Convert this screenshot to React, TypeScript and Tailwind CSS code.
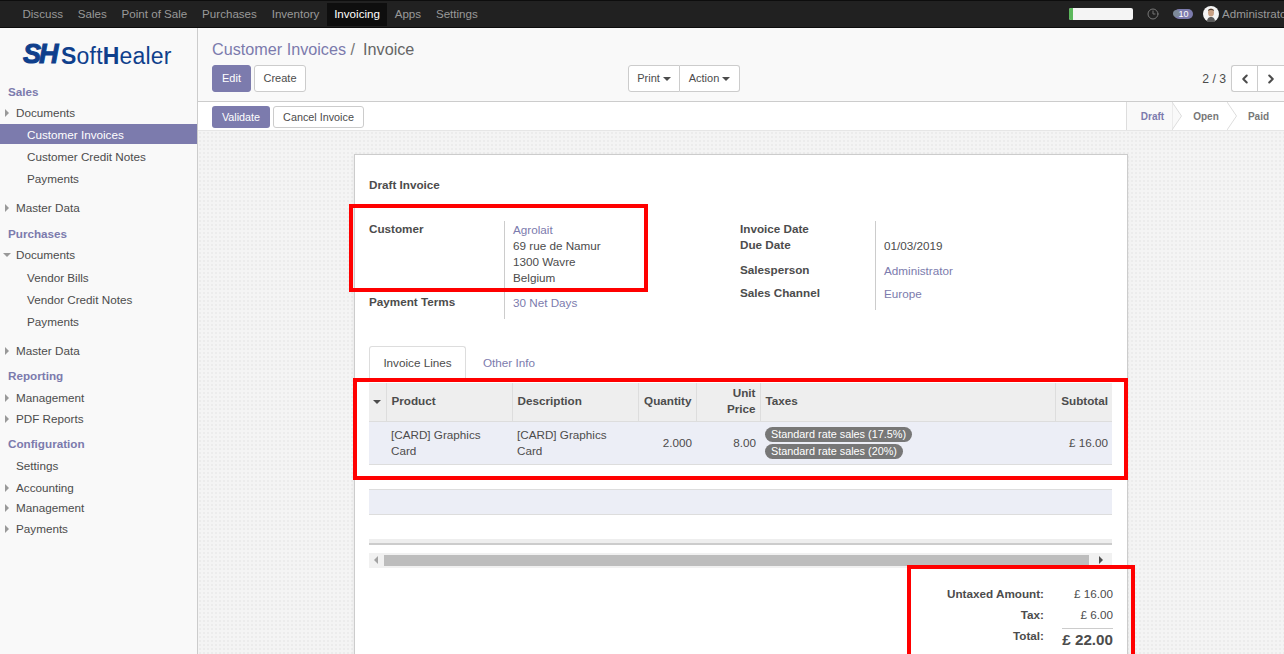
import { ChevronLeft, ChevronRight, Clock3 } from 'lucide-react'

const topMenu = ['Discuss', 'Sales', 'Point of Sale', 'Purchases', 'Inventory', 'Invoicing', 'Apps', 'Settings']

type NavRow = { label: string; kind: 'head' | 'root' | 'sub'; mt: string; caret?: 'right' | 'down'; active?: boolean }

const navRows: NavRow[] = [
  { label: 'Sales', kind: 'head', mt: 'mt-0' },
  { label: 'Documents', kind: 'root', mt: 'mt-[1px]', caret: 'right' },
  { label: 'Customer Invoices', kind: 'sub', mt: 'mt-[1px]', active: true },
  { label: 'Customer Credit Notes', kind: 'sub', mt: 'mt-[3px]' },
  { label: 'Payments', kind: 'sub', mt: 'mt-[2px]' },
  { label: 'Master Data', kind: 'root', mt: 'mt-[9px]', caret: 'right' },
  { label: 'Purchases', kind: 'head', mt: 'mt-[6px]' },
  { label: 'Documents', kind: 'root', mt: 'mt-[1px]', caret: 'down' },
  { label: 'Vendor Bills', kind: 'sub', mt: 'mt-[3px]' },
  { label: 'Vendor Credit Notes', kind: 'sub', mt: 'mt-[2px]' },
  { label: 'Payments', kind: 'sub', mt: 'mt-[2px]' },
  { label: 'Master Data', kind: 'root', mt: 'mt-[9px]', caret: 'right' },
  { label: 'Reporting', kind: 'head', mt: 'mt-[5px]' },
  { label: 'Management', kind: 'root', mt: 'mt-[2px]', caret: 'right' },
  { label: 'PDF Reports', kind: 'root', mt: 'mt-[1px]', caret: 'right' },
  { label: 'Configuration', kind: 'head', mt: 'mt-[5px]' },
  { label: 'Settings', kind: 'root', mt: 'mt-[2px]' },
  { label: 'Accounting', kind: 'root', mt: 'mt-[2px]', caret: 'right' },
  { label: 'Management', kind: 'root', mt: 'mt-0', caret: 'right' },
  { label: 'Payments', kind: 'root', mt: 'mt-[1px]', caret: 'right' },
]

function Caret({ dir, className = '' }: { dir: 'right' | 'down'; className?: string }) {
  return (
    <svg width="8" height="8" viewBox="0 0 8 8" className={`shrink-0 ${className}`}>
      {dir === 'right' ? <path d="M2 0 L6 4 L2 8 Z" fill="currentColor" /> : <path d="M0 2 L8 2 L4 6 Z" fill="currentColor" />}
    </svg>
  )
}

function Logo() {
  return (
    <div className="h-[54px] pl-[23px] pt-[16px] flex items-start gap-[4px] text-[#0f3f8c] leading-none">
      <span className="w-[34px] text-[27px] leading-[21px] italic font-bold tracking-[-2px] [-webkit-text-stroke:1px_#0f3f8c]">SH</span>
      <span className="text-[23px] leading-[21px] tracking-[0.2px] mt-[2px]">
        <b>S</b>of<span className="font-light">t</span><b>H</b>ealer
      </span>
    </div>
  )
}

function Sidebar() {
  return (
    <aside className="w-[198px] shrink-0 bg-[#f9f9f9] border-r border-[#cccccc]">
      <Logo />
      <nav className="text-[11.7px]">
        {navRows.map((r, i) => (
          <div
            key={i}
            className={`${r.mt} h-5 flex items-center ${r.kind === 'head' ? 'pl-[8px] font-bold text-[#7c7bad]' : ''} ${r.kind === 'root' ? 'pl-[16px] relative text-[#4c4c4c]' : ''} ${r.kind === 'sub' ? 'pl-[27px] text-[#4c4c4c]' : ''} ${r.active ? 'bg-[#7c7bad] text-white pt-[2px]' : ''}`}
          >
            {r.caret && <Caret dir={r.caret} className="absolute left-[3px] top-[6px] text-[#999999]" />}
            {r.label}
          </div>
        ))}
      </nav>
    </aside>
  )
}

function ControlPanel() {
  const btn = 'h-[27px] px-[9px] text-[11px] rounded-[3px] border flex items-center'
  return (
    <div className="h-[74px] shrink-0 bg-[#f9f9f9] border-b border-[#cccccc] pl-[14px] pt-[12px]">
      <div className="h-[25px] text-[16.2px] leading-[18px] text-[#4c4c4c]">
        <span className="text-[#7c7bad]">Customer Invoices</span>
        <span className="text-[#777777]"> /</span>
        <span className="text-[#666666] ml-[8px]">Invoice</span>
      </div>
      <div className="flex items-center">
        <button className={`${btn} w-[39px] justify-center bg-[#7c7bad] border-[#7c7bad] text-white`}>Edit</button>
        <button className={`${btn} w-[52px] justify-center ml-[3px] bg-white border-[#cccccc] text-[#4c4c4c]`}>Create</button>
        <div className="ml-[322px] flex">
          <button className={`${btn} w-[52px] justify-center gap-[3px] bg-white border-[#cccccc] text-[#4c4c4c] rounded-r-none`}>
            Print <Caret dir="down" className="text-[#4c4c4c]" />
          </button>
          <button className={`${btn} w-[60px] justify-center gap-[3px] bg-white border-[#cccccc] border-l-0 text-[#4c4c4c] rounded-l-none`}>
            Action <Caret dir="down" className="text-[#4c4c4c]" />
          </button>
        </div>
        <span className="ml-auto text-[12.2px] text-[#4c4c4c] mr-[5px] mt-[2px]">2 / 3</span>
        <div className="flex w-[53px] h-[27px] bg-white border border-[#cccccc] border-r-0 rounded-l-[3px]">
          <span className="w-[26px] border-r border-[#cccccc] flex items-center justify-center text-[#4c4c4c]">
            <ChevronLeft size={14} strokeWidth={3.5} />
          </span>
          <span className="flex-1 flex items-center justify-center text-[#4c4c4c]">
            <ChevronRight size={14} strokeWidth={3.5} />
          </span>
        </div>
      </div>
    </div>
  )
}

function StatusBar() {
  return (
    <div className="h-[28px] shrink-0 bg-white flex items-center pl-[14px]">
      <button className="h-[22px] w-[58px] mt-[2px] rounded-[3px] bg-[#7c7bad] text-white text-[10.8px]">Validate</button>
      <button className="h-[22px] w-[91px] mt-[2px] ml-[3px] rounded-[3px] bg-white border border-[#cccccc] text-[#4c4c4c] text-[10.8px]">Cancel Invoice</button>
      <div className="ml-auto flex h-full text-[10px] font-bold">
        <div className="flex h-full">
          <span className="w-[46px] pl-[6px] h-full flex items-center justify-center bg-[#f9f9f9] border-l border-[#dddddd] text-[#7c7bad]">Draft</span>
          <svg width="10" height="28" viewBox="0 0 10 28" className="shrink-0">
            <path d="M0 0 L9.5 14 L0 28 Z" fill="#f9f9f9" stroke="#dddddd" />
          </svg>
        </div>
        <div className="flex h-full">
          <span className="w-[45px] pl-[3px] h-full flex items-center justify-center text-[#777777]">Open</span>
          <svg width="10" height="28" viewBox="0 0 10 28" className="shrink-0">
            <path d="M0 0 L9.5 14 L0 28" fill="none" stroke="#dddddd" />
          </svg>
        </div>
        <span className="w-[47px] pr-[4px] h-full flex items-center justify-center text-[#777777]">Paid</span>
      </div>
    </div>
  )
}

function FormField({ label, labelClass = '', children }: { label: string; labelClass?: string; children: React.ReactNode }) {
  return (
    <div className="flex">
      <div className={`w-[135px] font-bold text-[#4c4c4c] ${labelClass}`}>{label}</div>
      <div className="border-l border-[#cccccc] pl-[8px] flex-1">{children}</div>
    </div>
  )
}

function InvoiceLines() {
  const th = 'border-l border-[#dddddd] pl-[5px] pr-[4px] pb-[2px] font-bold text-[#4c4c4c]'
  return (
    <table className="w-[743px] table-fixed border-collapse text-[#4c4c4c]">
      <thead>
        <tr className="h-[38px] bg-[#eeeeee] border-b border-[#dddddd]">
          <th className="w-[17px] px-0 pb-[2px]">
            <Caret dir="down" className="inline text-[#4c4c4c]" />
          </th>
          <th className={`${th} w-[126px] text-left`}>Product</th>
          <th className={`${th} w-[126px] text-left`}>Description</th>
          <th className={`${th} w-[58px] text-right`}>Quantity</th>
          <th className={`${th} w-[64px] text-right leading-[16px]`}>
            Unit<br />Price
          </th>
          <th className={`${th} w-[295px] text-left`}>Taxes</th>
          <th className={`${th} w-[57px] text-right`}>Subtotal</th>
        </tr>
      </thead>
      <tbody>
        <tr className="h-[43px] bg-[#eceef6] border-b border-[#dddddd] leading-[16px]">
          <td />
          <td className="px-[5px]">[CARD] Graphics Card</td>
          <td className="px-[5px]">[CARD] Graphics Card</td>
          <td className="pr-[4px] text-right">2.000</td>
          <td className="pr-[4px] text-right">8.00</td>
          <td className="px-[5px]">
            <div className="flex flex-col items-start gap-[2px] text-[10.85px] text-white">
              <span className="h-[15px] leading-[14px] px-[6px] rounded-full bg-[#777777]">Standard rate sales (17.5%)</span>
              <span className="h-[15px] leading-[14px] px-[6px] rounded-full bg-[#777777]">Standard rate sales (20%)</span>
            </div>
          </td>
          <td className="pr-[4px] text-right">£ 16.00</td>
        </tr>
      </tbody>
    </table>
  )
}

function InvoiceSheet() {
  return (
    <div className="relative mt-[23px] ml-[156px] w-[774px] h-[600px] bg-white border border-[#cccccc] shadow-[0_1px_3px_rgba(0,0,0,0.08)] text-[11.7px] text-[#4c4c4c] leading-[16px] pl-[14px] pr-[15px]">
      <div className="pt-[22px] h-[66px] font-bold">Draft Invoice</div>

      <div className="flex">
        {/* Left group */}
        <div className="w-[371px]">
          <FormField label="Customer">
            <div className="h-[64px] pt-[1px]">
              <div className="text-[#7c7bad]">Agrolait</div>
              <div>69 rue de Namur</div>
              <div>1300 Wavre</div>
              <div>Belgium</div>
            </div>
          </FormField>
          <FormField label="Payment Terms" labelClass="pt-[9px]">
            <div className="h-[34px] pt-[10px] text-[#7c7bad]">30 Net Days</div>
          </FormField>
        </div>
        {/* Right group */}
        <div className="w-[300px]">
          <FormField label="Invoice Date">
            <div className="h-[16px]" />
          </FormField>
          <FormField label="Due Date">
            <div className="h-[25px] pt-[1px]">01/03/2019</div>
          </FormField>
          <FormField label="Salesperson">
            <div className="h-[23px] pt-[1px] text-[#7c7bad]">Administrator</div>
          </FormField>
          <FormField label="Sales Channel">
            <div className="h-[25px] pt-[1px] text-[#7c7bad]">Europe</div>
          </FormField>
        </div>
      </div>

      {/* Tabs */}
      <div className="mt-[27px] flex h-[34px] items-stretch">
        <div className="w-[97px] pb-[2px] border border-[#dddddd] border-b-0 rounded-t-[3px] flex items-center justify-center">Invoice Lines</div>
        <div className="ml-[17px] flex items-center text-[#7c7bad]">Other Info</div>
      </div>

      <div className="mt-[3px]">
        <InvoiceLines />
      </div>

      <div className="mt-[24px] w-[743px] h-[26px] bg-[#eceef6] border-y border-[#dddddd]" />
      <div className="mt-[24px] w-[743px] h-[6px] bg-[#eeeeee] border-b-2 border-[#cccccc]" />

      {/* Scrollbar */}
      <div className="mt-[8px] w-[743px] h-[15px] bg-[#f1f1f1] flex items-center">
        <span className="w-[15px] flex justify-center text-[#a3a3a3] rotate-180"><Caret dir="right" /></span>
        <span className="w-[705px] h-[11px] bg-[#bdbdbd]" />
        <span className="flex-1 flex justify-center text-[#505050]"><Caret dir="right" /></span>
      </div>

      {/* Totals */}
      <div className="mt-[18px] ml-[536px] w-[208px]">
        <div className="flex justify-between">
          <span className="w-[139px] text-right font-bold">Untaxed Amount:</span>
          <span>£ 16.00</span>
        </div>
        <div className="flex justify-between mt-[5px]">
          <span className="w-[139px] text-right font-bold">Tax:</span>
          <span>£ 6.00</span>
        </div>
        <div className="flex mt-[5px]">
          <span className="w-[139px] text-right font-bold">Total:</span>
          <span className="ml-[18px] flex-1 text-right border-t border-[#cccccc] text-[15.2px] font-bold pt-[3px] whitespace-nowrap">£ 22.00</span>
        </div>
      </div>
    </div>
  )
}

export default function App() {
  return (
    <div className="relative h-[654px] w-[1284px] overflow-hidden flex flex-col bg-white font-['Liberation_Sans',Arial,sans-serif]">
      {/* Top menu */}
      <header className="h-[28px] shrink-0 bg-[#212121] border-y border-black/60 flex items-center pl-[15px] text-[11.6px] text-[#999999]">
        {topMenu.map(m => (
          <span
            key={m}
            className={`h-[23px] px-[7.4px] flex items-center ${m === 'Invoicing' ? 'bg-[#0e0e0e] text-white' : ''}`}
          >
            {m}
          </span>
        ))}
        <div className="ml-auto flex items-center">
          <span className="w-[64px] h-[12px] rounded-[2px] bg-[#f4f4f4] overflow-hidden">
            <span className="block w-[4px] h-full bg-[#5cb85c]" />
          </span>
          <Clock3 size={12} className="ml-[14px] text-[#777777]" />
          <span className="relative ml-[15px] h-[10px] w-[19px] rounded-full bg-[#7c7bad] text-white text-[9px] leading-[10px] text-center">
            <span className="absolute -left-[1px] top-[1px] w-[7px] h-[7px] rounded-full bg-[#7d8a99]" />
            <span className="relative">10</span>
          </span>
          <svg width="16" height="16" viewBox="0 0 16 16" className="ml-[10px] shrink-0">
            <circle cx="8" cy="8" r="8" fill="#f4f4f4" />
            <path d="M4 16 C4 12 6 11 8 11 C10 11 12 12 12 16 Z" fill="#5a5a5a" />
            <ellipse cx="8" cy="6.5" rx="3" ry="4" fill="#c9a184" />
            <path d="M5 5 C5 2 11 2 11 5 C9.5 3.8 6.5 3.8 5 5 Z" fill="#4a3a30" />
          </svg>
          <span className="ml-[3px] w-[62px] overflow-hidden whitespace-nowrap">Administrator</span>
        </div>
      </header>

      <div className="flex flex-1 min-h-0">
        <Sidebar />
        <main className="flex-1 min-w-0 flex flex-col">
          <ControlPanel />
          <StatusBar />
          <div className="flex-1 min-h-0 overflow-hidden border-t border-[#e6e6e6] bg-[#f4f4f4] bg-[radial-gradient(#ececec_1px,transparent_1px)] bg-[size:4px_4px]">
            <InvoiceSheet />
          </div>
        </main>
      </div>

      {/* Red annotation boxes */}
      <div className="absolute left-[349px] top-[204px] w-[299px] h-[88px] border-[4px] border-[#ff0000]" />
      <div className="absolute left-[353px] top-[378px] w-[775px] h-[102px] border-[4px] border-[#ff0000]" />
      <div className="absolute left-[907px] top-[565px] w-[228px] h-[100px] border-[4px] border-[#ff0000]" />
    </div>
  )
}
